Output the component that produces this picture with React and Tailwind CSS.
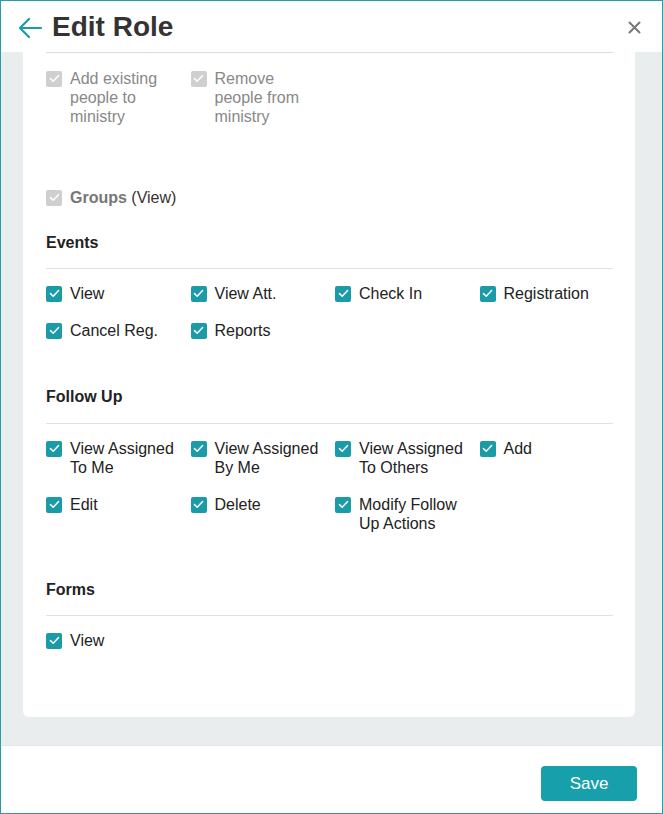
import React from 'react';

const sections = [
  {
    title: 'Events',
    items: [
      ['View'], ['View Att.'], ['Check In'], ['Registration'],
      ['Cancel Reg.'], ['Reports'],
    ],
  },
  {
    title: 'Follow Up',
    items: [
      ['View Assigned', 'To Me'], ['View Assigned', 'By Me'], ['View Assigned', 'To Others'], ['Add'],
      ['Edit'], ['Delete'], ['Modify Follow', 'Up Actions'],
    ],
  },
  {
    title: 'Forms',
    items: [['View']],
  },
];

function Check({ disabled }) {
  return (
    <span
      className={`mt-[1.5px] flex h-4 w-4 shrink-0 items-center justify-center rounded-[2px] ${
        disabled ? 'bg-[#cfcfcf]' : 'bg-[#1a9ba7]'
      }`}
    >
      <svg width="11" height="9" viewBox="0 0 11 9" fill="none">
        <path d="M1.5 4.6 L4.2 7.2 L9.6 1.6" stroke="white" strokeWidth="1.5" strokeLinecap="round" strokeLinejoin="round" />
      </svg>
    </span>
  );
}

function Item({ lines, disabled, children }) {
  return (
    <div className="flex items-start gap-2">
      <Check disabled={disabled} />
      <span className={`leading-[19px] ${disabled ? 'text-[#888]' : 'text-[#222]'}`}>
        {children ||
          lines.map((l, i) => (
            <span key={i} className="block">
              {l}
            </span>
          ))}
      </span>
    </div>
  );
}

export default function App() {
  return (
    <div
      className="flex h-[814px] w-full flex-col overflow-hidden border border-[#2b9ba5] bg-white text-[16px]"
      style={{ fontFamily: '"Liberation Sans", Arial, sans-serif' }}
    >
      {/* Header */}
      <div className="flex h-[51px] shrink-0 items-center pl-[16px] pr-[21px]">
        <svg width="26" height="24" viewBox="0 0 26 24" fill="none" className="mr-[9px] mt-[2px]">
          <path d="M24 12 H4 M12 3 L3 12 L12 21" stroke="#1a9ba7" strokeWidth="2.2" strokeLinecap="round" strokeLinejoin="round" />
        </svg>
        <h1 className="text-[28px] font-bold leading-none text-[#333]">Edit Role</h1>
        <svg width="13" height="13" viewBox="0 0 13 13" className="ml-auto mt-[2px]">
          <path d="M1.5 1.5 L11.5 11.5 M11.5 1.5 L1.5 11.5" stroke="#777" strokeWidth="2" strokeLinecap="round" />
        </svg>
      </div>

      {/* Body */}
      <div className="flex-1 bg-[#e9edee] pl-[22px] pr-[27px] pb-[28px]">
        <div className="h-full rounded-b-md bg-white pl-[23px] pr-[22px]">
          <div className="h-px bg-[#dcdcdc]" />

          <div className="mt-4 grid grid-cols-[144.5px_144.5px_144.5px_1fr] gap-y-[18px]">
            <Item disabled lines={['Add existing', 'people to', 'ministry']} />
            <Item disabled lines={['Remove', 'people from', 'ministry']} />
          </div>

          <div className="mt-[62px]">
            <Item disabled>
              <b className="font-bold text-[#777]">Groups</b> <span className="text-[#333]">(View)</span>
            </Item>
          </div>

          {sections.map((s, idx) => (
            <div key={s.title} className={idx === 0 ? 'mt-[26px]' : 'mt-[47px]'}>
              <h2 className="font-bold leading-[19px] text-[#222]">{s.title}</h2>
              <div className={`${idx === 1 ? 'mt-[17px]' : 'mt-4'} h-px bg-[#e0e0e0]`} />
              <div className="mt-[15px] grid grid-cols-[144.5px_144.5px_144.5px_1fr] gap-y-[18px]">
                {s.items.map((lines, i) => (
                  <Item key={i} lines={lines} />
                ))}
              </div>
            </div>
          ))}
        </div>
      </div>

      {/* Footer */}
      <div className="flex h-[68px] shrink-0 items-start justify-end border-t border-[#e3e6e7] pr-[25px] pt-[20px]">
        <button className="h-[35px] w-[96px] rounded-[4px] bg-[#179fab] text-[17px] text-white">Save</button>
      </div>
    </div>
  );
}
